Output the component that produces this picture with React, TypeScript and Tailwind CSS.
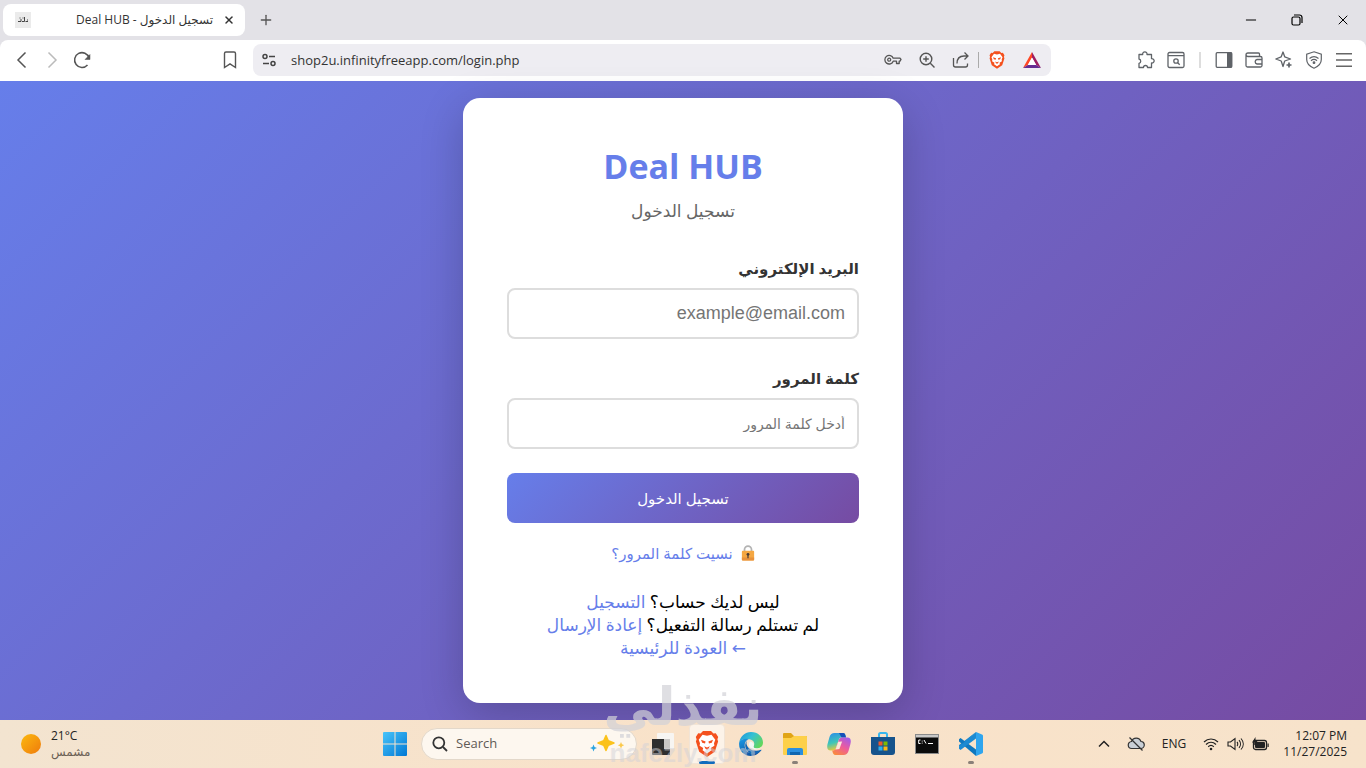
import React from 'react';
import { clsx } from 'clsx';
import { Minus, Plus, X } from 'lucide-react';

interface IconProps {
  className?: string;
}

const BraveIcon = ({ className }: IconProps) => (
  <svg viewBox="0 0 24 26" className={className} aria-hidden="true">
    <path d="M8 0h8l2.500 2.600 2.300-.300L23.200 6l-.800 2.200.700 2.400-3.300 10.200L12 26l-7.800-5.200L.900 10.600l.700-2.400L.800 6l2.400-3.700 2.300.300z" fill="#f4511e" />
    <path d="M7.500 3.800l4.500 1 4.500-1 3.800 5-1.300 3.400.4 2.600-3.600 2.300.6 2.200L12 22.400l-4.400-3.100.6-2.200-3.600-2.300.4-2.600-1.300-3.400z" fill="#fff" />
    <path d="M6 8.800l4.600 1.600-.6 2.200-2.800-.8zM18 8.800l-4.600 1.600.6 2.200 2.800-.8zM9.200 15.300l2.800 1.200 2.800-1.200-1.300 2.500-1.500 1-1.500-1z" fill="#f4511e" />
  </svg>
);

const TuneIcon = () => (
  <svg viewBox="0 0 16 16" className="size-4 shrink-0" fill="none" stroke="#444" strokeWidth="1.500" aria-hidden="true">
    <circle cx="4" cy="4.500" r="2" />
    <path d="M8 4.500h6M2 11.500h6" />
    <circle cx="12" cy="11.500" r="2" />
  </svg>
);

const KeyIcon = () => (
  <svg viewBox="0 0 18 18" className="size-[18px]" fill="none" stroke="#555" strokeWidth="1.300" strokeLinejoin="round" aria-hidden="true">
    <path d="M9.200 7.200H16l1 1.300-1 1.700h-.800v2.300h-2.700v-2.300H9.200a4.300 4.300 0 1 1 0-3z" />
    <circle cx="5.200" cy="8.700" r="1.500" />
  </svg>
);

const ZoomIcon = () => (
  <svg viewBox="0 0 18 18" className="size-[18px]" fill="none" stroke="#555" strokeWidth="1.400" aria-hidden="true">
    <circle cx="8" cy="8" r="5.800" />
    <path d="M12.300 12.300l4.200 4.200M8 5.200v5.600M5.200 8h5.600" />
  </svg>
);

const ShareIcon = () => (
  <svg viewBox="0 0 18 18" className="size-[18px]" fill="none" stroke="#555" strokeWidth="1.300" aria-hidden="true">
    <path d="M1.500 7v7a2 2 0 0 0 2 2h10a2 2 0 0 0 2-2v-1.500" />
    <path d="M5 12.500c0-4.500 2.500-7.500 7-7.500h3.500M12.500 1.500L16 5l-3.500 3.500" />
  </svg>
);

const BatIcon = () => (
  <svg viewBox="0 0 18 16" className="h-4 w-[18px]" aria-hidden="true">
    <path d="M9 0L0 16l4.800-3L9 5.500z" fill="#ff4724" />
    <path d="M9 0l9 16-4.800-3L9 5.500z" fill="#9e1f63" />
    <path d="M0 16h18l-4.800-3H4.800z" fill="#662d91" />
    <path d="M9 5.500L4.800 13h8.400z" fill="#fff" />
  </svg>
);

const PuzzleIcon = () => (
  <svg viewBox="0 0 18 18" className="size-[18px]" fill="none" stroke="#5f6368" strokeWidth="1.300" strokeLinejoin="round" aria-hidden="true">
    <path d="M2 3.500h3.700a2.200 2.200 0 1 1 4.300 0h4.500v4.200a2.200 2.200 0 1 1 0 4.300v4.500h-4a2 2 0 0 0-4 0H2v-4.200a2.200 2.200 0 0 0 0-4.300z" />
  </svg>
);

const SearchTabsIcon = () => (
  <svg viewBox="0 0 18 18" className="size-[18px]" fill="none" stroke="#5f6368" strokeWidth="1.300" aria-hidden="true">
    <rect x="1" y="1.500" width="16" height="15" rx="1.500" />
    <path d="M1 4.700h16M10.700 11.700l2 2" />
    <circle cx="9" cy="10" r="2.200" />
  </svg>
);

const SidebarIcon = () => (
  <svg viewBox="0 0 18 18" className="size-[18px]" aria-hidden="true">
    <rect x="1.200" y="1.700" width="15.600" height="14.600" rx="1" fill="none" stroke="#5f6368" strokeWidth="1.300" />
    <path d="M12 1.500h5v15h-5z" fill="#5f6368" />
  </svg>
);

const WalletIcon = () => (
  <svg viewBox="0 0 18 18" className="size-[18px]" fill="none" stroke="#5f6368" strokeWidth="1.300" aria-hidden="true">
    <path d="M14.500 5.500V3a1 1 0 0 0-1-1H3a2 2 0 0 0-2 2v10.500a1.500 1.500 0 0 0 1.500 1.500h13a1.500 1.500 0 0 0 1.500-1.500V7a1.500 1.500 0 0 0-1.500-1.500H3A2 2 0 0 1 1 4" />
    <path d="M17 8.500h-5a2.300 2.300 0 0 0 0 4.500h5" />
  </svg>
);

const LeoIcon = () => (
  <svg viewBox="0 0 18 18" className="size-[18px]" fill="none" stroke="#5f6368" strokeWidth="1.300" strokeLinejoin="round" aria-hidden="true">
    <path d="M8 1l1.700 4.800L15.500 8l-5.800 2L8 15.500 6.200 10 .800 8l5.400-2.200z" />
    <path d="M14 11.500v5M11.500 14h5" strokeWidth="1.700" />
  </svg>
);

const VpnIcon = () => (
  <svg viewBox="0 0 18 18" className="size-[18px]" fill="none" stroke="#5f6368" strokeWidth="1.200" aria-hidden="true">
    <path d="M9 .800l7.300 2.400v5.300c0 4.300-3.600 7.200-7.300 8.700-3.700-1.500-7.300-4.400-7.300-8.700V3.200z" />
    <path d="M4.500 7.500c2.700-2.200 6.300-2.200 9 0M6 9.700c1.800-1.500 4.200-1.500 6 0" />
    <circle cx="9" cy="11.700" r=".8" fill="#5f6368" />
  </svg>
);

const LockIcon = () => (
  <svg viewBox="0 0 16 18" className="h-4 w-[14px]" aria-hidden="true">
    <path d="M4 8V5a4 4 0 0 1 8 0v3" fill="none" stroke="#b3b3b3" strokeWidth="2" />
    <rect x="1" y="6.500" width="14" height="11" rx="1" fill="#f5a742" />
    <path d="M1 14h14v2.500a1 1 0 0 1-1 1H2a1 1 0 0 1-1-1z" fill="#e8913b" />
    <circle cx="8" cy="10.500" r="1.600" fill="#4a3b35" />
    <path d="M7.300 11h1.400v4H7.300z" fill="#4a3b35" />
  </svg>
);

const StartIcon = () => (
  <svg viewBox="0 0 24 24" className="size-6" aria-hidden="true">
    <defs>
      <linearGradient id="start" x1="0" y1="0" x2="1" y2="1" gradientUnits="objectBoundingBox">
        <stop offset="0" stopColor="#48c4fa" />
        <stop offset="1" stopColor="#0078d4" />
      </linearGradient>
    </defs>
    <path d="M1 0h10.500v11.500H0V1a1 1 0 0 1 1-1zM12.500 0H23a1 1 0 0 1 1 1v10.500H12.500zM0 12.500h11.500V24H1a1 1 0 0 1-1-1zM12.500 12.500H24V23a1 1 0 0 1-1 1H12.500z" fill="url(#start)" />
  </svg>
);

const SparkleIcon = () => (
  <svg viewBox="0 0 34 20" className="mr-1 h-5 w-[34px]" aria-hidden="true">
    <path d="M16 1.500l2.300 5.200L24 9l-5.700 2.300L16 16.500l-2.300-5.200L8 9l5.700-2.300z" fill="#fbc21c" stroke="#fbc21c" strokeWidth="1.500" strokeLinejoin="round" />
    <path d="M3.500 10.500l1 2.500 2.500 1-2.500 1-1 2.500-1-2.500-2.500-1 2.500-1z" fill="#2aa3e0" />
    <path d="M31 8l1 2.200 2.200 1-2.200 1-1 2.300-1-2.300-2.200-1 2.200-1z" fill="#fbc94d" />
  </svg>
);

const TaskViewIcon = () => (
  <svg viewBox="0 0 24 24" className="size-6" aria-hidden="true">
    <rect x="6" y="1" width="17" height="16" rx="1" fill="#f7f5f2" />
    <path d="M1 7h12v10h6v6H2a1 1 0 0 1-1-1z" fill="#2e2e2e" />
    <path d="M13 7h6v10h-6z" fill="#c9c7c5" />
  </svg>
);

const EdgeIcon = () => (
  <svg viewBox="0 0 24 24" className="size-6" aria-hidden="true">
    <defs>
      <linearGradient id="edgeTop" x1="0" y1="0" x2="1" y2="0.6">
        <stop offset="0" stopColor="#1c8fdb" />
        <stop offset="0.500" stopColor="#35c1d4" />
        <stop offset="1" stopColor="#62d65f" />
      </linearGradient>
      <linearGradient id="edgeBase" x1="0" y1="0" x2="0.600" y2="1">
        <stop offset="0" stopColor="#1b9be6" />
        <stop offset="1" stopColor="#0d4f9e" />
      </linearGradient>
    </defs>
    <path d="M.2 10.500C1.200 4.500 6 0 12 0c7 0 12 5 12 10.500 0 3.500-2.600 6-6 6-2.800 0-4.200-1.200-3.300-2.500 1.300-1.800.8-6-4.200-6.800C6 6.500 1.500 7.500.2 10.500z" fill="url(#edgeTop)" />
    <path d="M.2 10.500C1.500 7 6 6.200 9.800 7.100 6.500 8.500 5 12 6 15.500c1.200 4.300 5.500 6.800 10 5.800 2.600-.6 4.800-2 6.200-3.500C20.200 21.500 16.500 24 12 24 5 24-.8 18 .2 10.500z" fill="url(#edgeBase)" />
    <path d="M9.800 7.100c-3 1.800-3.300 6 .2 9.100 3.200 2.800 8 3.200 12 1.500.5 0 .7.200.4.600-2.400 3.200-8 5.200-12.200 2.400-4.400-3-6-9.600-.4-13.600z" fill="#1166b5" />
    <path d="M11.500 9.500c2.500.5 4.200 2.700 3.200 4.500-.9 1.300.5 2.500 3.300 2.500 1.800 0 3.300-.5 4.300-1.400-1.500 2.500-7.500 3.300-10.500.8-2.500-2.200-2.300-4.900-.3-6.400z" fill="#f1f7f5" />
  </svg>
);

const FolderIcon = () => (
  <svg viewBox="0 0 24 22" className="h-[22px] w-6" aria-hidden="true">
    <path d="M1 0h7l3 3h12a1 1 0 0 1 1 1v7H0V1a1 1 0 0 1 1-1z" fill="#e0a417" />
    <path d="M0 5h8l3-2h12a1 1 0 0 1 1 1v17a1 1 0 0 1-1 1H1a1 1 0 0 1-1-1z" fill="#fdd04a" />
    <path d="M6 15h12a2 2 0 0 1 2 2v5H4v-5a2 2 0 0 1 2-2z" fill="#2a8fdf" />
    <path d="M7 19h10v3H7z" fill="#0f66b0" />
  </svg>
);

const CopilotIcon = () => (
  <svg viewBox="0 0 24 24" className="size-6" aria-hidden="true">
    <defs>
      <linearGradient id="copA" x1="0" y1="0" x2="0.300" y2="1">
        <stop offset="0" stopColor="#2a8bea" />
        <stop offset="0.600" stopColor="#3fc6b8" />
        <stop offset="1" stopColor="#e9c83c" />
      </linearGradient>
      <linearGradient id="copB" x1="0.800" y1="0" x2="0.200" y2="1">
        <stop offset="0" stopColor="#a45be8" />
        <stop offset="0.500" stopColor="#ee5b9b" />
        <stop offset="1" stopColor="#f98b3c" />
      </linearGradient>
    </defs>
    <path d="M7.500 1H16c2 0 2.500 2 3 4.500h-4.500c-1.600 0-2.500 1.200-3 3L9 16c-.6 1.800-1.800 2.500-3.500 2.500H3.700C0 18.500-.3 15 .7 11.500L2.500 5c.8-2.700 2.500-4 5-4z" fill="url(#copA)" />
    <path d="M12 1h4c2 0 2.500 2 3 4.500h-4.500z" fill="#174fb8" />
    <path d="M16.500 23H8.500c-2 0-2.800-1.800-3.300-4.500h.8c1.700 0 2.600-.9 3.200-2.700l2.500-7.500C12.300 6.500 13.300 5.500 15 5.500h5.300c3.700 0 4 3.500 3 7L21.500 19c-.8 2.700-2.500 4-5 4z" fill="url(#copB)" />
    <path d="M11.300 9.800l3.800-.3-2.700 7.500-3.800.6z" fill="#fbe9d8" />
  </svg>
);

const StoreIcon = () => (
  <svg viewBox="0 0 24 24" className="size-6" aria-hidden="true">
    <path d="M8 6V2.500A1.500 1.500 0 0 1 9.500 1h5A1.500 1.500 0 0 1 16 2.500V6" fill="none" stroke="#38b6ee" strokeWidth="2" />
    <path d="M0 5h24v15a3 3 0 0 1-3 3H3a3 3 0 0 1-3-3z" fill="#16538c" />
    <path d="M7.500 9.500h4v4h-4z" fill="#f1592a" />
    <path d="M12.500 9.500h4v4h-4z" fill="#7fba00" />
    <path d="M7.500 14.500h4v4h-4z" fill="#2fb0ee" />
    <path d="M12.500 14.500h4v4h-4z" fill="#fdb913" />
  </svg>
);

const TerminalIcon = () => (
  <svg viewBox="0 0 24 20" className="h-5 w-6" aria-hidden="true">
    <rect x="0.500" y="0.500" width="23" height="19" fill="#0b0b0b" stroke="#8a8a8a" />
    <path d="M1 1h22v2.500H1z" fill="#c8c8c8" />
    <path d="M5.500 6H3.700v3.500h1.800M7.200 6.700v.800M7.200 8.700v.800M9 6l2 3.500M13 9.500h5" fill="none" stroke="#fff" />
  </svg>
);

const CodeIcon = () => (
  <svg viewBox="0 0 24 24" className="size-6" aria-hidden="true">
    <path d="M17 0L5 11.500 1.500 15 0 14.200V13z" fill="#1c86cc" />
    <path d="M1.500 6L17 17.500V24L0 9.500V7.300z" fill="#0f78bf" />
    <path d="M1.500 18L17 6.500V0L0 14.500v2.200z" fill="#1c8ad2" />
    <path d="M17 0l6 2.500a1.500 1.500 0 0 1 1 1.500v16a1.500 1.500 0 0 1-1 1.500L17 24z" fill="#2fa5ee" />
  </svg>
);

const taskbarApps = [
  { name: 'Task view', icon: <TaskViewIcon /> },
  { name: 'Brave', icon: <BraveIcon className="h-[26px] w-6" />, active: true },
  { name: 'Edge', icon: <EdgeIcon /> },
  { name: 'File Explorer', icon: <FolderIcon />, running: true },
  { name: 'Copilot', icon: <CopilotIcon /> },
  { name: 'Microsoft Store', icon: <StoreIcon /> },
  { name: 'Command Prompt', icon: <TerminalIcon /> },
  { name: 'Visual Studio Code', icon: <CodeIcon />, running: true },
];

const TitleBar = () => (
  <header className="flex h-10 shrink-0 items-center justify-between bg-[#e3e2e7]">
    <div className="flex items-center">
      <div className="ml-[3px] flex h-8 w-[242px] items-center rounded-lg bg-white pr-1.5 pl-3">
        <span className="flex size-4 items-center justify-center bg-[#ebebeb]">
          <svg viewBox="0 0 10 6" className="h-1.5 w-2.5" aria-hidden="true">
            <path d="M0 4.500h3V2M4 4.500h2.500V0M7.500 4.500H10V2M2 .500v1M5 .500v1" fill="none" stroke="#444" />
          </svg>
        </span>
        <span dir="rtl" className="flex-1 truncate pr-1.5 text-xs text-[#333]">تسجيل الدخول - Deal HUB</span>
        <button aria-label="Close tab" className="flex size-5 items-center justify-center text-[#333]">
          <X className="size-3" strokeWidth={3} />
        </button>
      </div>
      <button aria-label="New tab" className="ml-[11px] flex size-5 items-center justify-center text-[#555]">
        <Plus className="size-4" strokeWidth={2} />
      </button>
    </div>
    <div className="flex text-black">
      <button aria-label="Minimize" className="flex h-10 w-[46px] items-center justify-center">
        <Minus className="size-4" strokeWidth={1.5} />
      </button>
      <button aria-label="Restore" className="flex h-10 w-[46px] items-center justify-center">
        <svg viewBox="0 0 12 12" className="size-3" fill="none" stroke="#000" strokeWidth="1.200" aria-hidden="true">
          <rect x="1" y="3" width="8" height="8" rx="1.500" />
          <path d="M3 1h5.500A2.500 2.500 0 0 1 11 3.500V9" />
        </svg>
      </button>
      <button aria-label="Close" className="flex h-10 w-[46px] items-center justify-center">
        <X className="size-4" strokeWidth={1.5} />
      </button>
    </div>
  </header>
);

const Toolbar = () => (
  <div className="shrink-0 bg-[#e3e2e7]">
    <nav className="flex h-[41px] items-center rounded-t-lg bg-white px-[13px] pb-px">
      <div className="flex items-center gap-3">
        <button aria-label="Back">
          <svg viewBox="0 0 18 18" className="size-[18px]" fill="none" stroke="#555" strokeWidth="1.500" aria-hidden="true">
            <path d="M12.500 1.500L5 9l7.500 7.500" />
          </svg>
        </button>
        <button aria-label="Forward">
          <svg viewBox="0 0 18 18" className="size-[18px]" fill="none" stroke="#bbb" strokeWidth="1.500" aria-hidden="true">
            <path d="M5.500 1.500L13 9l-7.500 7.500" />
          </svg>
        </button>
        <button aria-label="Reload">
          <svg viewBox="0 0 18 18" className="size-[18px]" fill="none" stroke="#555" strokeWidth="1.500" aria-hidden="true">
            <path d="M14.500 14a7.400 7.400 0 1 1 1.600-7" />
            <path d="M17 3.500v5h-5z" fill="#555" strokeWidth="0.500" />
          </svg>
        </button>
      </div>
      <div className="mr-[86px] ml-[130px] flex min-w-0 flex-1 items-center gap-3.5">
        <button aria-label="Bookmark">
          <svg viewBox="0 0 18 18" className="size-[18px]" fill="none" stroke="#555" strokeWidth="1.400" aria-hidden="true">
            <path d="M3.500 2.500A1.500 1.500 0 0 1 5 1h8a1.500 1.500 0 0 1 1.500 1.500v14L9 12.800l-5.500 3.700z" />
          </svg>
        </button>
        <div className="flex h-8 flex-1 items-center rounded-lg bg-[#eeedf2] pr-2.5 pl-2">
          <TuneIcon />
          <input
            type="text"
            aria-label="Address"
            defaultValue="shop2u.infinityfreeapp.com/login.php"
            className="ml-3.5 h-6 min-w-0 flex-1 bg-transparent text-[13px] text-[#333] outline-none"
          />
          <div className="flex items-center gap-4">
            <button aria-label="Passwords"><KeyIcon /></button>
            <button aria-label="Zoom"><ZoomIcon /></button>
            <button aria-label="Share"><ShareIcon /></button>
          </div>
          <span className="mx-2 h-4 w-px bg-[#aaa]" />
          <button aria-label="Brave Shields"><BraveIcon className="mx-0.5 h-[18px] w-4" /></button>
          <button aria-label="Brave Rewards" className="ml-4"><BatIcon /></button>
        </div>
      </div>
      <div className="flex items-center gap-3">
        <button aria-label="Extensions"><PuzzleIcon /></button>
        <button aria-label="Search tabs"><SearchTabsIcon /></button>
        <span className="mx-0.5 h-4 w-0.5 bg-[#ddd]" />
        <button aria-label="Sidebar"><SidebarIcon /></button>
        <button aria-label="Wallet"><WalletIcon /></button>
        <button aria-label="Leo AI"><LeoIcon /></button>
        <button aria-label="VPN"><VpnIcon /></button>
        <button aria-label="Menu">
          <svg viewBox="0 0 18 18" className="size-[18px]" fill="none" stroke="#666" strokeWidth="1.500" aria-hidden="true">
            <path d="M1 2.700h16M1 9h16M1 15.300h16" />
          </svg>
        </button>
      </div>
    </nav>
  </div>
);

interface FieldProps {
  id: string;
  label: string;
  type: string;
  placeholder: string;
  className?: string;
}

const Field = ({ id, label, type, placeholder, className }: FieldProps) => (
  <div>
    <label htmlFor={id} className="mb-2 block text-[15px] leading-[23px] font-bold text-[#333]">{label}</label>
    <input
      id={id}
      type={type}
      placeholder={placeholder}
      className={clsx(
        "h-[51px] w-full rounded-lg border-2 border-[#ddd] px-3 text-right font-['Liberation_Sans','DejaVu_Sans',sans-serif] text-[#333] placeholder:text-[#757575]",
        className
      )}
    />
  </div>
);

const LoginCard = () => (
  <section
    dir="rtl"
    className="w-full max-w-[440px] rounded-[17px] bg-white p-11 text-center shadow-[0_11px_44px_rgba(0,0,0,0.2)]"
  >
    <h1 className="text-[34px] leading-[49px] font-bold text-[#667eea]">Deal HUB</h1>
    <p className="mt-2 text-[17px] leading-6 text-[#666]">تسجيل الدخول</p>
    <form className="mt-[34px] text-right" onSubmit={(e) => e.preventDefault()}>
      <div className="flex flex-col gap-7">
        <Field id="email" label="البريد الإلكتروني" type="email" placeholder="example@email.com" className="text-lg" />
        <Field id="password" label="كلمة المرور" type="password" placeholder="أدخل كلمة المرور" className="text-sm" />
      </div>
      <button
        type="submit"
        className="mt-6 h-[50px] w-full rounded-lg bg-[linear-gradient(135deg,#667eea_0%,#764ba2_100%)] text-[15px] text-white"
      >
        تسجيل الدخول
      </button>
    </form>
    <a href="#forgot" className="mt-[19px] flex items-center justify-center gap-2 text-[15px] leading-[22px] text-[#667eea]">
      <LockIcon />
      نسيت كلمة المرور؟
    </a>
    <div className="mt-[26px] text-[17px] leading-[23px] text-black">
      <p>ليس لديك حساب؟ <a href="#register" className="text-[#667eea]">التسجيل</a></p>
      <p>لم تستلم رسالة التفعيل؟ <a href="#resend" className="text-[#667eea]">إعادة الإرسال</a></p>
      <p><a href="#home" className="text-[#667eea]">← العودة للرئيسية</a></p>
    </div>
  </section>
);

const Watermark = () => (
  <div className="pointer-events-none absolute inset-x-0 bottom-0 flex flex-col items-center text-center text-[#d2d2d8]">
    <span dir="rtl" className="font-['DejaVu_Sans',sans-serif] text-[52px] leading-[62px] font-bold opacity-70">نفذلي</span>
    <span className="font-['Liberation_Sans',sans-serif] text-[26px] leading-[30px] font-bold opacity-50">nafezly.com</span>
  </div>
);

const Taskbar = () => (
  <footer className="grid h-12 shrink-0 grid-cols-[1fr_auto_1fr] items-center bg-linear-to-r from-[#f3e4d0] via-[#f9e2c9] to-[#f7e3cb] text-xs text-[#222]">
    <div className="flex items-center gap-2.5 pl-[21px]">
      <span className="size-5 rounded-full bg-linear-to-br from-[#fbb90f] to-[#ee7a0c]" />
      <div className="leading-4">
        <div>21°C</div>
        <div dir="rtl" className="text-[#6b6055]">مشمس</div>
      </div>
    </div>
    <div className="flex items-center">
      <button aria-label="Start" className="flex size-11 items-center justify-center"><StartIcon /></button>
      <div className="mx-1 flex h-8 w-[216px] items-center rounded-full border border-[#e3d8ca] bg-[#fdf7ef] pr-2 pl-2.5">
        <svg viewBox="0 0 16 16" className="size-4 shrink-0" fill="none" stroke="#333" strokeWidth="1.800" aria-hidden="true">
          <circle cx="6.800" cy="6.800" r="5.500" />
          <path d="M11 11l4 4" />
        </svg>
        <input
          type="search"
          aria-label="Search"
          placeholder="Search"
          className="ml-2 min-w-0 flex-1 bg-transparent text-[13px] outline-none placeholder:text-[#5f5a55]"
        />
        <SparkleIcon />
      </div>
      {taskbarApps.map((app) => (
        <button
          key={app.name}
          aria-label={app.name}
          className="relative flex size-11 items-center justify-center"
        >
          {app.active && <span className="absolute inset-x-1 inset-y-0.5 rounded border border-[#f1e4d6] bg-[#fcf3e9]" />}
          <span className="relative">{app.icon}</span>
          {(app.active || app.running) && (
            <span
              className={clsx(
                'absolute bottom-0.5 h-[3px] rounded-full',
                app.active ? 'w-4 bg-[#0f6cbd]' : 'w-1.5 bg-[#8a8078]'
              )}
            />
          )}
        </button>
      ))}
    </div>
    <div className="flex items-center justify-end pr-[19px]">
      <svg viewBox="0 0 12 8" className="h-2 w-3" fill="none" stroke="#222" strokeWidth="1.500" aria-hidden="true">
        <path d="M1 6.500l5-5 5 5" />
      </svg>
      <svg viewBox="0 0 18 16" className="ml-[17px] h-4 w-[18px]" fill="#c9cfd6" stroke="#333" strokeWidth="1.200" aria-hidden="true">
        <path d="M5 12.500h8.500a3.500 3.500 0 0 0 .5-7A5 5 0 0 0 4.500 5.500a3.500 3.500 0 0 0 .5 7z" />
        <path d="M2.500 1.500l13 13" />
      </svg>
      <span className="mx-[17px]">ENG</span>
      <div className="flex items-center gap-2">
        <svg viewBox="0 0 16 14" className="h-3.5 w-4" fill="none" stroke="#222" strokeWidth="1.200" aria-hidden="true">
          <path d="M1 5c4-4 10-4 14 0M3 7.500c3-3 7-3 10 0M5.200 9.800c1.700-1.600 3.900-1.600 5.600 0" />
          <circle cx="8" cy="12" r="1.300" fill="#222" stroke="none" />
        </svg>
        <svg viewBox="0 0 17 14" className="h-3.5 w-[17px]" fill="none" stroke="#222" strokeWidth="1.100" aria-hidden="true">
          <path d="M1 5h2.500L8 1.500v11L3.500 9H1zM10 5c1 1 1 3 0 4M12 3.200c2 2.200 2 5.400 0 7.600M14 1.500c3 3.300 3 7.700 0 11" />
        </svg>
        <svg viewBox="0 0 17 14" className="h-3.5 w-[17px]" aria-hidden="true">
          <rect x="1.500" y="3.500" width="13" height="9" rx="2" fill="none" stroke="#222" strokeWidth="1.300" />
          <rect x="3" y="5" width="10" height="6" rx="1" fill="#222" />
          <path d="M15.500 6.500h1.200v3.500h-1.200zM3.500 0L0 5.500h2.500L1.500 9 6 3.500H3.500z" fill="#222" />
        </svg>
      </div>
      <div className="ml-3.5 text-right leading-4">
        <div>12:07 PM</div>
        <div>11/27/2025</div>
      </div>
    </div>
  </footer>
);

export default function App() {
  return (
    <div className="relative flex min-h-screen flex-col font-['Open_Sans','DejaVu_Sans',sans-serif]">
      <TitleBar />
      <Toolbar />
      <main className="flex flex-1 items-center justify-center bg-[linear-gradient(135deg,#667eea_0%,#764ba2_100%)] px-5 py-4">
        <LoginCard />
      </main>
      <Taskbar />
      <Watermark />
    </div>
  );
}
